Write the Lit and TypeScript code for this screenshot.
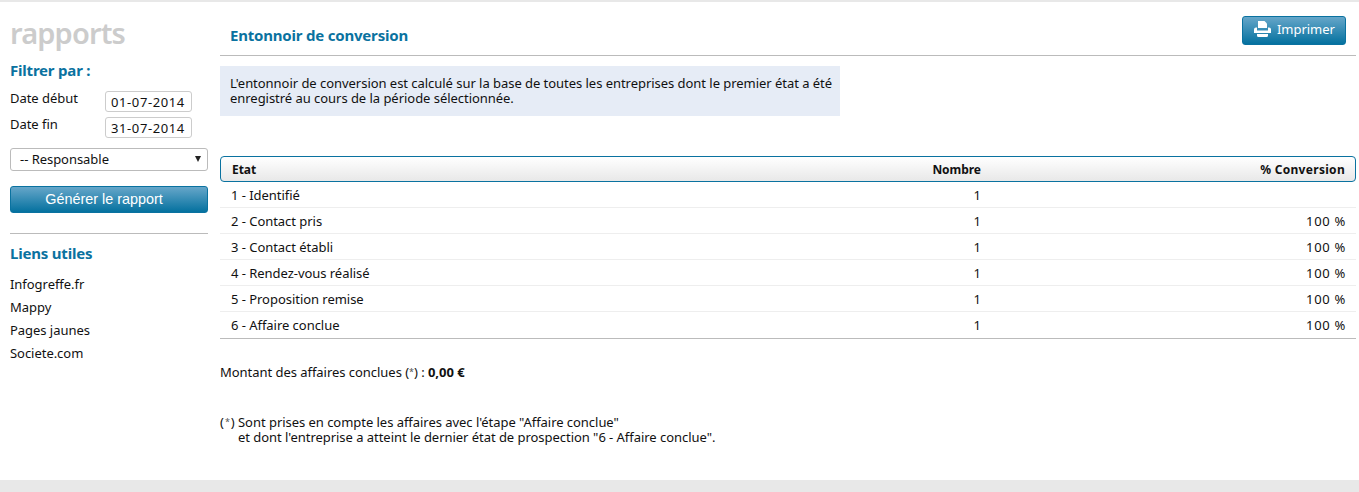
import { LitElement, html, css } from "lit";
import { customElement } from "lit/decorators.js";

const rows = [
  ["1 - Identifié", "1", ""],
  ["2 - Contact pris", "1", "100 %"],
  ["3 - Contact établi", "1", "100 %"],
  ["4 - Rendez-vous réalisé", "1", "100 %"],
  ["5 - Proposition remise", "1", "100 %"],
  ["6 - Affaire conclue", "1", "100 %"],
];

@customElement("app-root")
export class AppRoot extends LitElement {
  static styles = css`
    :host {
      display: block;
      height: 492px;
      overflow: hidden;
      background: #e8e8e8;
      font-family: "Noto Sans", sans-serif;
      font-size: 13px;
      letter-spacing: -0.04px;
      color: #111;
    }
    .page {
      margin-top: 2px;
      height: 478px;
      background: #fff;
      display: flex;
      padding-left: 10px;
      box-sizing: border-box;
    }
    .side { width: 198px; margin-right: 12px; flex: none; }
    .title {
      font-size: 29px; font-weight: 600; color: #ccc; line-height: 36px;
      margin-top: 13px; letter-spacing: -0.85px;
    }
    h3 {
      margin: 0; color: #0a72a0; font-size: 15px; font-weight: 700; line-height: 20px;
      letter-spacing: -0.2px;
    }
    .filter { margin-top: 9px; }
    .date { display: flex; justify-content: space-between; height: 26px; padding-right: 16px; }
    .dates { margin-top: 9px; }
    .date label { line-height: 18px; }
    .date .inp {
      width: 87px; height: 21px; box-sizing: border-box; border: 1px solid #ccc; border-radius: 3px;
      font-size: 13px; line-height: 20px; padding-left: 5px; letter-spacing: 0.6px; margin-top: 2px;
    }
    .sel {
      margin-top: 7px; height: 23px; box-sizing: border-box; border: 1px solid #bbb; border-radius: 3px;
      display: flex; align-items: center; justify-content: space-between; padding: 0 6px 1px 9px;
    }
    .sel svg { display: block; }
    .gen {
      margin-top: 15px; height: 27px; border-radius: 3px; color: #fff; text-align: center;
      font-family: "Liberation Sans", sans-serif; font-size: 14.4px; line-height: 24px; letter-spacing: 0;
      background: linear-gradient(#66a6c9, #04719f);
      border: 1px solid #0a72a0; box-sizing: border-box; padding-right: 10px;
    }
    hr { border: 0; border-top: 1px solid #bbb; margin: 20px 0 0; }
    .links-title { margin-top: 9px; }
    .links { margin-top: 10px; display: flex; flex-direction: column; }
    .links a { height: 23px; line-height: 23px; color: #111; }
    .main { flex: 1; padding-right: 3px; min-width: 0; }
    .head {
      height: 54px; border-bottom: 1px solid #bbb; display: flex; align-items: flex-start;
      justify-content: space-between; padding-left: 10px; box-sizing: border-box;
    }
    .head h3 { margin-top: 23px; }
    .print {
      margin-top: 14px; margin-right: 10px; width: 104px; height: 29px; box-sizing: border-box;
      border: 1px solid #0a72a0; border-radius: 3px; color: #fff;
      background: linear-gradient(#66a6c9, #04719f);
      display: flex; align-items: center; gap: 6px; padding-left: 11px;
    }
    .print span { margin-bottom: 3px; }
    .print svg { margin-bottom: 3px; }
    .info {
      margin-top: 10px; width: 620px; height: 50px; box-sizing: border-box; background: #e6ecf6;
      padding: 10px 0 0 10px; line-height: 15px; white-space: nowrap;
    }
    .thead {
      margin-top: 40px; height: 27px; box-sizing: border-box; border: 1px solid #0a72a0; border-radius: 4px;
      background: linear-gradient(#fff, #e8e8e8);
      font-weight: 700; font-size: 12px; padding-left: 10px;
    }
    .thead.row { grid-template-columns: 1fr 100px 364px; }
    .thead > :nth-child(3) { letter-spacing: 0.3px; }
    .row {
      display: grid; grid-template-columns: 1fr 100px 365px; align-items: center;
      height: 26px; padding: 0 10px 0 11px; box-sizing: border-box;
    }
    .row > :nth-child(2), .row > :nth-child(3) { text-align: right; }
    .row.body { border-bottom: 1px solid #eee; }
    .row.body > :nth-child(3) { letter-spacing: 0.7px; }
    .row.body:last-child { border-bottom: 1px solid #bbb; height: 27px; }
    .amount { margin-top: 24px; line-height: 18px; }
    .note { margin-top: 34px; line-height: 15px; }
    .note .in { padding-left: 18px; }
    .star { font-size: 9px; vertical-align: 2px; line-height: 0; color: #555; }
    .note .star { padding: 0 1px; }
  `;

  render() {
    const star = html`(<span class="star">*</span>)`;
    return html`<div class="page">
      <div class="side">
        <div class="title">rapports</div>
        <h3 class="filter">Filtrer par :</h3>
        <div class="dates">
          <div class="date"><label>Date début</label><div class="inp">01-07-2014</div></div>
          <div class="date"><label>Date fin</label><div class="inp">31-07-2014</div></div>
        </div>
        <div class="sel"><span>-- Responsable</span>
          <svg width="6" height="6" viewBox="0 0 6 6"><path d="M0 0h6L3 6z" fill="#222"/></svg></div>
        <div class="gen">Générer le rapport</div>
        <hr />
        <h3 class="links-title">Liens utiles</h3>
        <div class="links"><a>Infogreffe.fr</a><a>Mappy</a><a>Pages jaunes</a><a>Societe.com</a></div>
      </div>
      <div class="main">
        <div class="head">
          <h3>Entonnoir de conversion</h3>
          <div class="print">
            <svg width="17" height="16" viewBox="0 0 17 16" fill="#fff">
              <path d="M4 0h6.500L13 2.500V7H4z"/><path d="M2 6.500h1v3h11v-3h1a2 2 0 0 1 2 2V12H0V8.500a2 2 0 0 1 2-2z"/><path d="M3 13h11v1.500A1.500 1.500 0 0 1 12.500 16h-8A1.500 1.500 0 0 1 3 14.500z"/>
            </svg>
            <span>Imprimer</span>
          </div>
        </div>
        <div class="info">L'entonnoir de conversion est calculé sur la base de toutes les entreprises dont le premier état a été<br />enregistré au cours de la période sélectionnée.</div>
        <div class="thead row"><div>Etat</div><div>Nombre</div><div>% Conversion</div></div>
        <div>
          ${rows.map((r) => html`<div class="row body"><div>${r[0]}</div><div>${r[1]}</div><div>${r[2]}</div></div>`)}
        </div>
        <div class="amount">Montant des affaires conclues ${star} : <b>0,00 €</b></div>
        <div class="note">${star} Sont prises en compte les affaires avec l'étape "Affaire conclue"<div class="in">et dont l'entreprise a atteint le dernier état de prospection "6 - Affaire conclue".</div></div>
      </div>
    </div>`;
  }
}
